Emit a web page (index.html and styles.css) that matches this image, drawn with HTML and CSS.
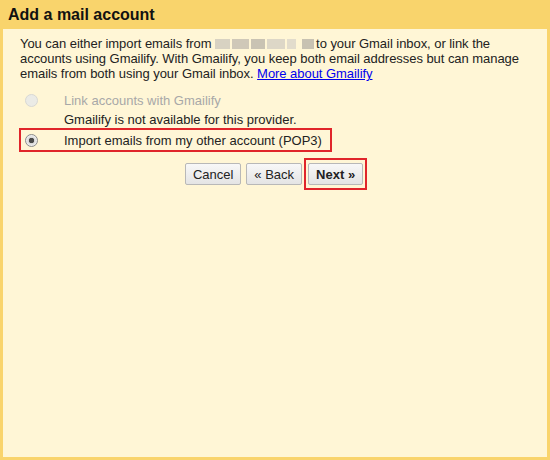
FILE: index.html
```html
<!DOCTYPE html>
<html lang="en">
<head>
    <meta charset="UTF-8">
    <title>Add a mail account</title>
    <link rel="stylesheet" href="styles.css">
</head>
<body>
    <div class="dialog">
        <h1 class="dialog-title">Add a mail account</h1>
        <div class="dialog-body">
            <p class="intro">
                You can either import emails from <span class="blurred"><i></i><i></i><i></i><i></i><i></i><i></i></span>to your Gmail inbox, or link the<br>
                accounts using Gmailify. With Gmailify, you keep both email addresses but can manage<br>
                emails from both using your Gmail inbox. <a href="#">More about Gmailify</a>
            </p>

            <div class="options">
                <label class="option disabled">
                    <span class="radio"></span>
                    <span>Link accounts with Gmailify</span>
                </label>
                <div class="note">Gmailify is not available for this provider.</div>
                <label class="option selected highlight">
                    <span class="radio checked"></span>
                    <span>Import emails from my other account (POP3)</span>
                </label>
            </div>

            <div class="actions">
                <button class="btn">Cancel</button>
                <button class="btn">&laquo; Back</button>
                <span class="highlight-btn"><button class="btn primary">Next &raquo;</button></span>
            </div>
        </div>
    </div>
</body>
</html>
```

FILE: styles.css
```css
/* Base */
body, html {
    margin: 0;
    padding: 0;
    width: 100%;
    height: 100%;
    font-family: 'Liberation Sans', Arial, sans-serif;
    font-size: 13px;
    color: #222222;
}

/* Dialog frame */
.dialog {
    box-sizing: border-box;
    height: 460px;
    background-color: #f9d46c;
    padding: 0 3px 3px 3px;
    display: flex;
    flex-direction: column;
}

.dialog-title {
    margin: 0;
    height: 29px;
    padding-left: 5px;
    font-size: 16px;
    font-weight: bold;
    line-height: 29px;
    color: #111111;
}

.dialog-body {
    flex: 1;
    background-color: #fff6d6;
    padding: 7px 17px 0 17px;
}

/* Intro text */
.intro {
    margin: 0;
    line-height: 15px;
    white-space: nowrap;
    letter-spacing: -0.05px;
}

.intro a {
    color: #0000ee;
}

.blurred {
    display: inline-flex;
    gap: 2px;
    vertical-align: -1px;
    margin-right: 2px;
}

.blurred i {
    display: inline-block;
    width: 15px;
    height: 10px;
    background-color: #d8d2c2;
}

.blurred i:nth-child(2) { background-color: #cfc8b8; width: 17px; }
.blurred i:nth-child(3) { background-color: #c9c3b3; width: 14px; }
.blurred i:nth-child(4) { background-color: #ddd7c7; width: 18px; }
.blurred i:nth-child(5) { background-color: #e2dccc; width: 9px; }
.blurred i:nth-child(6) { background-color: #c8c2b2; width: 12px; margin-left: 4px; }

/* Options */
.options {
    margin-top: 9px;
    margin-left: -1px;
}

.option {
    display: flex;
    align-items: center;
    height: 20px;
    padding-left: 6px;
}

.option .radio {
    box-sizing: border-box;
    width: 13px;
    height: 13px;
    border-radius: 50%;
    margin-right: 26px;
    border: 1px solid #c8c8c8;
    background: linear-gradient(#f4f4f4, #dedede);
}

.option.disabled {
    color: #a8a8a8;
}

.option.disabled .radio {
    border-color: #d8d8d4;
    background: #ebebe6;
}

.option .radio.checked {
    border-color: #8a8a8a;
    background: radial-gradient(circle, #4a4a4a 0 2.5px, #d8d8d8 3px, #f6f6f6 6px);
}

.note {
    padding-left: 45px;
    height: 17px;
    line-height: 17px;
    margin-top: 1px;
}

.highlight {
    box-sizing: border-box;
    width: 313px;
    height: 24px;
    margin-top: 0;
    border: 2px solid #e0252b;
    padding-left: 4px;
}

/* Buttons */
.actions {
    display: flex;
    justify-content: center;
    align-items: center;
    gap: 5px;
    margin-top: 6px;
    padding-left: 2px;
}

.btn {
    font-family: 'Liberation Sans', Arial, sans-serif;
    font-size: 13px;
    height: 22px;
    padding: 0 7px;
    border: 1px solid #b8b8b8;
    border-radius: 2px;
    background: linear-gradient(#f8f8f8, #e4e4e4);
    color: #222222;
}

.btn.primary {
    font-weight: bold;
    padding: 0 7px;
}

.highlight-btn {
    display: inline-flex;
    padding: 3px 2px;
    border: 2px solid #e0252b;
    margin-left: -3px;
}
```
